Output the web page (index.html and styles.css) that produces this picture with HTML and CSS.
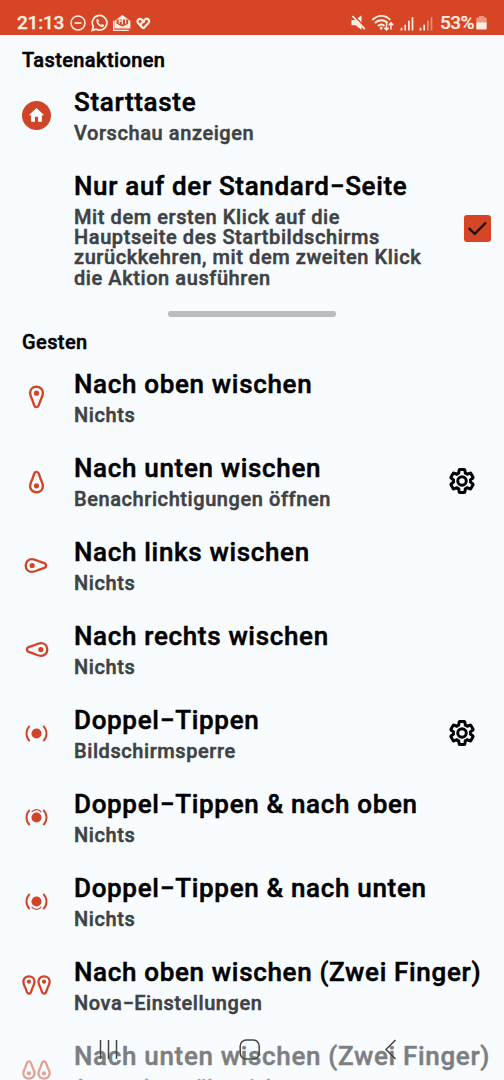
FILE: index.html
```html
<!DOCTYPE html>
<html lang="de">
<head>
  <meta charset="UTF-8" />
  <meta name="viewport" content="width=device-width, initial-scale=1" />
  <title>Gesten und Tasten</title>
  <link rel="stylesheet" href="styles.css">
</head>
<body>

<svg class="defs" aria-hidden="true">
  <symbol id="drop" viewBox="0 0 28 28">
    <path d="M14 3.600c-3.800 0-6.200 2.700-6.200 6.100 0 2.300 1.300 4.600 2.300 7l1.700 4.900c.8 2.200 3.600 2.200 4.400 0l1.700-4.900c1-2.400 2.300-4.700 2.300-7 0-3.400-2.400-6.100-6.200-6.100z" fill="none" stroke="currentColor" stroke-width="2.300"/>
    <circle cx="14" cy="9.800" r="2.500" fill="currentColor"/>
  </symbol>
  <symbol id="drops" viewBox="0 0 28 28">
    <path id="d" d="M6.700 5.200c-3.100 0-5.400 2.200-5.400 5.100 0 2 1.100 3.800 1.900 5.800l1.600 4.400c.7 1.900 3.100 1.900 3.800 0l1.600-4.400c.8-2 1.900-3.800 1.900-5.800 0-2.900-2.300-5.100-5.400-5.100z" fill="none" stroke="currentColor" stroke-width="2.200"/>
    <circle cx="6.700" cy="10.300" r="2" fill="currentColor"/>
    <use href="#d" x="14.600"/>
    <circle cx="21.300" cy="10.300" r="2" fill="currentColor"/>
  </symbol>
  <symbol id="tap" viewBox="0 0 28 28">
    <circle cx="14" cy="14" r="4.900" fill="currentColor"/>
    <path d="M7.400 6.600c-4.100 4.400-4.100 10.400 0 14.800M20.600 6.600c4.100 4.400 4.100 10.400 0 14.800" fill="none" stroke="currentColor" stroke-width="1.900"/>
  </symbol>
  <symbol id="tap-up" viewBox="0 0 28 28">
    <use href="#tap"/>
    <path d="M9.300 8.900c2.200-3.400 7.200-3.400 9.400 0" fill="none" stroke="currentColor" stroke-width="1.200"/>
  </symbol>
  <symbol id="gear" viewBox="0 0 24 24">
    <path d="M19.430 12.980c.04-.32.070-.64.070-.98s-.03-.66-.07-.98l2.110-1.650c.19-.15.240-.42.120-.64l-2-3.460c-.12-.22-.39-.3-.61-.22l-2.490 1c-.52-.4-1.080-.73-1.690-.98l-.38-2.650C14.460 2.180 14.250 2 14 2h-4c-.25 0-.46.180-.49.420l-.38 2.650c-.61.250-1.170.590-1.690.98l-2.490-1c-.23-.09-.49 0-.61.220l-2 3.460c-.13.220-.07.490.12.640l2.110 1.650c-.04.320-.07.650-.07.980s.03.660.07.980l-2.110 1.650c-.19.150-.24.420-.12.640l2 3.460c.12.220.39.300.61.220l2.490-1c.52.400 1.080.73 1.690.98l.38 2.650c.03.240.24.420.49.420h4c.25 0 .46-.18.490-.42l.38-2.650c.61-.25 1.170-.59 1.690-.98l2.490 1c.23.090.49 0 .61-.22l2-3.460c.12-.22.070-.49-.12-.64l-2.110-1.650z" fill="none" stroke="currentColor" stroke-width="2.600" transform="translate(1.700 1.700) scale(.858)"/>
    <circle cx="12" cy="12" r="3.200" fill="none" stroke="currentColor" stroke-width="2.200"/>
  </symbol>
</svg>

<header class="statusbar">
  <span class="clock">21:13</span>
  <svg class="notifications" width="84" height="18" viewBox="0 0 84 18" fill="none" stroke="currentColor">
    <circle cx="8" cy="9" r="7" stroke-width="1.500"/>
    <path d="M4.600 9h6.800" stroke-width="1.700"/>
    <path d="M22.200 16.400l1.100-3.900a7.300 7.300 0 1 1 2.800 2.700z" stroke-width="1.700"/>
    <path d="M26.300 6.100c.4-1.200 1.800-1.500 2.200-.3l.5 1.300-.8 1.200c.7 1.300 1.600 2.100 2.900 2.600l1-1 2 1c.5 1.400-1.400 2.400-2.900 2-2.800-.7-5.200-3.800-4.900-6.800z" fill="currentColor" stroke="none"/>
    <path d="M44.400 7l8-6 8 6v7.600h-16z" fill="currentColor" stroke="none"/>
    <path d="M43.600 6.800v9.500h15.200" stroke-width="1.200"/>
    <path d="M46.600 5.500h11.600v4.300L52.400 12.600l-5.800-2.800z" fill="#d64525" stroke="none"/>
    <path d="M49.200 5.500v4M52.400 4.500v6M55.600 5.500v4M49.200 7.200h3.200" stroke-width="1.200"/>
    <path d="M73.300 14.500l-5-5.200c-2.500-3.200 1.700-6.100 3.900-3.200l2.400 2.500M73.300 14.500l5.100-5.400c2.300-3.200-1.700-6-3.900-3.200l-3.800 4.400" stroke-width="2.200"/>
  </svg>
  <svg class="signals" width="84" height="18" viewBox="0 0 84 18" fill="none" stroke="currentColor">
    <path d="M.5 6h4l6-4.800v14.600l-6-4.600h-4z" fill="currentColor" stroke="none"/>
    <path d="M2.600 1.200l12.600 13.400" stroke="#d64525" stroke-width="1.600"/>
    <path d="M1.500 2l12.300 13.200" stroke-width="1.800"/>
    <path d="M21.400 6c4.900-5.500 13-5.500 17.800-.1M24 9.200c3.400-3.900 9.200-3.900 12.600-.1M27 12c1.800-2 4.600-2 6.400 0" stroke-width="1.900"/>
    <circle cx="30.200" cy="14" r="1.500" fill="currentColor" stroke="none"/>
    <path d="M35.500 9.300v6.500m-2.200-2l2.200 2.200 2.200-2.200M40 15.500V9.100m-2.200 2l2.200-2.200 2.200 2.200" stroke-width="1.500"/>
    <path d="M50.500 16.500v-2.800M54.200 16.500v-5.800M57.900 16.500V6.800M61.500 16.500V3.300" stroke-width="1.700"/>
    <path d="M69.500 16.500v-2.800M73.200 16.500v-5.800" stroke-width="1.700"/>
    <path d="M76.900 16.500V6.800M80.500 16.500V3.300" stroke-width="1.700" opacity=".45"/>
  </svg>
  <span class="percent">53%</span>
  <svg class="battery" width="11" height="14" viewBox="0 0 11 14" fill="currentColor">
    <path d="M3 0h5v1.600h1.500c.8 0 1.200.5 1.200 1.200V7H.3V2.800c0-.7.4-1.200 1.200-1.200H3z" opacity=".5"/>
    <path d="M.3 6.600h10.400v5.600c0 .8-.5 1.300-1.300 1.300H1.600c-.8 0-1.300-.5-1.300-1.300z"/>
  </svg>
</header>

<main class="settings">
  <h2 class="section-title">Tastenaktionen</h2>
  <div class="row">
    <svg class="icon" viewBox="0 0 28 28">
      <circle cx="14" cy="14" r="14" fill="currentColor"/>
      <path d="M14 6.800l-7.400 6.900h2.200v6.400h3.700v-4.800h3v4.800h3.700v-6.400h2.200z" fill="#fff"/>
    </svg>
    <div class="text"><h3>Starttaste</h3><p>Vorschau anzeigen</p></div>
  </div>
  <div class="row">
    <div class="text indent">
      <h3>Nur auf der Standard<span class="dash">–</span>Seite</h3>
      <p>Mit dem ersten Klick auf die<br>Hauptseite des Startbildschirms<br>zurückkehren, mit dem zweiten Klick<br>die Aktion ausführen</p>
    </div>
    <span class="checkbox">
      <svg width="27" height="27" viewBox="0 0 27 27"><path d="M4.800 13.200l5.900 5.600L22 7.500" fill="none" stroke="#1b0f12" stroke-width="2.300"/></svg>
    </span>
  </div>

  <div class="divider"></div>

  <h2 class="section-title">Gesten</h2>
  <div class="row">
    <svg class="icon"><use href="#drop"/></svg>
    <div class="text"><h3>Nach oben wischen</h3><p>Nichts</p></div>
  </div>
  <div class="row">
    <svg class="icon down"><use href="#drop"/></svg>
    <div class="text"><h3>Nach unten wischen</h3><p>Benachrichtigungen öffnen</p></div>
    <svg class="gear"><use href="#gear"/></svg>
  </div>
  <div class="row">
    <svg class="icon left"><use href="#drop"/></svg>
    <div class="text"><h3>Nach links wischen</h3><p>Nichts</p></div>
  </div>
  <div class="row">
    <svg class="icon right"><use href="#drop"/></svg>
    <div class="text"><h3>Nach rechts wischen</h3><p>Nichts</p></div>
  </div>
  <div class="row">
    <svg class="icon"><use href="#tap"/></svg>
    <div class="text"><h3>Doppel<span class="dash">–</span>Tippen</h3><p>Bildschirmsperre</p></div>
    <svg class="gear"><use href="#gear"/></svg>
  </div>
  <div class="row">
    <svg class="icon"><use href="#tap-up"/></svg>
    <div class="text"><h3>Doppel<span class="dash">–</span>Tippen &amp; nach oben</h3><p>Nichts</p></div>
  </div>
  <div class="row">
    <svg class="icon down"><use href="#tap-up"/></svg>
    <div class="text"><h3>Doppel<span class="dash">–</span>Tippen &amp; nach unten</h3><p>Nichts</p></div>
  </div>
  <div class="row">
    <svg class="icon"><use href="#drops"/></svg>
    <div class="text"><h3>Nach oben wischen (Zwei Finger)</h3><p>Nova<span class="dash">–</span>Einstellungen</p></div>
  </div>
  <div class="row">
    <svg class="icon down"><use href="#drops"/></svg>
    <div class="text"><h3>Nach unten wischen (Zwei Finger)</h3><p>Anwendungsübersicht</p></div>
  </div>
</main>

<nav class="navbar">
  <svg width="22" height="22" viewBox="0 0 22 22"><path d="M2.500 1v19M10.500 1v19M18.500 1v19"/></svg>
  <svg width="22" height="22" viewBox="0 0 22 22"><rect x="1.200" y="1" width="19" height="19" rx="6"/></svg>
  <svg width="22" height="22" viewBox="0 0 22 22"><path d="M16.500 1L7 10.500 16.500 20"/></svg>
</nav>

</body>
</html>
```
FILE: styles.css
```css
* {
  box-sizing: border-box;
}
body {
  margin: 0;
  height: 1080px;
  overflow: hidden;
  position: relative;
  font-family: Roboto, sans-serif;
  font-weight: 500;
  background: #f9fcff;
  color: #000;
}
h2, h3, p {
  margin: 0;
  font-weight: 500;
  white-space: nowrap;
  -webkit-text-stroke: 0.5px currentColor;
}
.defs {
  display: none;
}
.statusbar {
  display: flex;
  align-items: center;
  height: 35px;
  padding: 10px 17px 0 17px;
  background: #d64525;
  color: #ffeee0;
  font-size: 19px;
  line-height: 25px;
}
.clock {
  width: 53px;
  letter-spacing: -0.2px;
  -webkit-text-stroke: 0.3px currentColor;
}
.signals {
  margin-left: auto;
}
.percent {
  margin-left: 5px;
  width: 36px;
  letter-spacing: -0.5px;
  -webkit-text-stroke: 0.2px currentColor;
}
.battery {
  flex: none;
}
.section-title {
  height: 38px;
  padding: 13px 22px 0;
  font-size: 20px;
  line-height: 24px;
  letter-spacing: 0.4px;
}
.row {
  display: flex;
  align-items: center;
  min-height: 84px;
  padding: 13.9px 13px 13.9px 22px;
}
.icon {
  flex: none;
  width: 29px;
  height: 29px;
  margin-right: 23px;
  color: #d04427;
}
.down {
  transform: rotate(180deg);
}
.left {
  transform: rotate(-90deg);
}
.right {
  transform: rotate(90deg);
}
.text {
  flex: 1;
  min-width: 0;
}
.indent {
  margin-left: 52px;
}
.text h3 {
  font-size: 26px;
  line-height: 30px;
  letter-spacing: 0.67px;
}
.text p {
  margin-top: 6px;
  font-size: 20px;
  line-height: 20.2px;
  letter-spacing: 0.58px;
  color: #3e4245;
}
.text .dash {
  display: inline-block;
  margin: 0 -0.6px 0 -0.4px;
  letter-spacing: 0;
  transform: scaleX(0.84);
}
.checkbox {
  width: 27px;
  height: 27px;
  margin-top: -1px;
  border-radius: 3px;
  background: #d64525;
}
.checkbox svg {
  display: block;
}
.gear {
  width: 32px;
  height: 32px;
  margin-right: 13px;
}
.divider {
  width: 168px;
  height: 6px;
  margin: 9px auto 0.5px;
  border-radius: 3px;
  background: #b9bdbc;
}
/* translucent system bar over the list */
.navbar {
  position: absolute;
  left: 0;
  right: 0;
  bottom: 0;
  height: 60px;
  display: flex;
  justify-content: space-between;
  padding: 19px 103px 0 98px;
  background: rgba(249, 252, 255, 0.5);
  fill: none;
  stroke: #444;
  stroke-width: 1.5;
}
```
